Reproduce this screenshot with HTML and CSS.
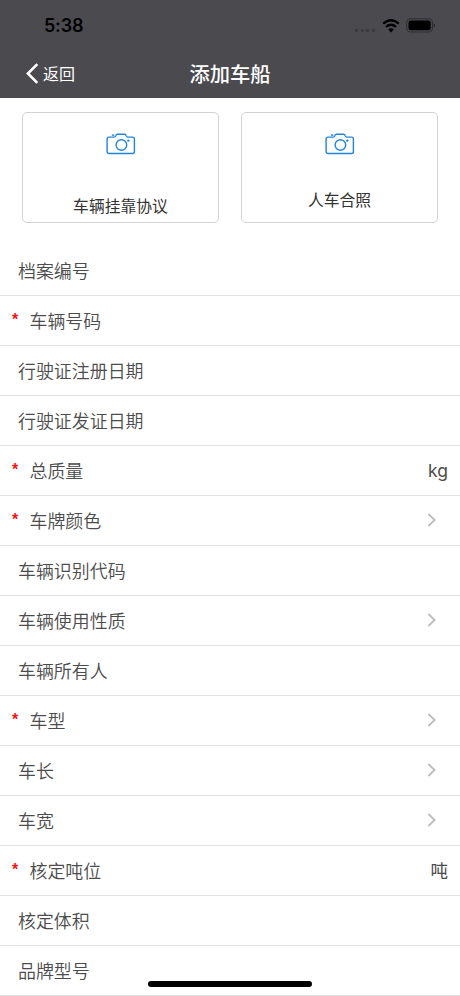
FILE: index.html
```html
<!DOCTYPE html>
<html lang="zh-CN">
<head>
<meta charset="utf-8">
<title>添加车船</title>
<link rel="stylesheet" href="styles.css">
</head>
<body>
<svg width="0" height="0" class="defs">
  <symbol id="camera" viewBox="0 0 30 22">
    <path d="M3 4.1H8.2Q9.4 4.1 9.8 2.9Q10.2 1.3 11.5 1.3H18.5Q19.8 1.3 20.2 2.9Q20.6 4.1 21.8 4.1H26.5Q28.4 4.1 28.4 6V18.6Q28.4 20.5 26.5 20.5H3Q1.1 20.5 1.1 18.6V6Q1.1 4.1 3 4.1Z"/>
    <circle cx="15.4" cy="12" r="5.3"/>
    <path d="M5.8 2.1H8.4"/>
    <circle class="dot" cx="22.3" cy="7.6" r="1.2"/>
  </symbol>
  <symbol id="chevron" viewBox="0 0 10 16"><path d="M1.4 2 7.6 8 1.4 14"/></symbol>
</svg>
<main class="screen">
  <header class="header">
    <div class="status">
      <span class="time">5:38</span>
      <div class="indicators">
        <div class="signal"><i></i><i></i><i></i><i></i></div>
        <svg class="wifi" width="18" height="14" viewBox="0 0 18 14">
          <path d="M1.2 4.7Q9-2.2 16.8 4.7M4.1 7.8Q9 3.6 13.9 7.8"/>
          <path class="base" d="M6.2 10.3Q9 8.2 11.8 10.3L9 13.4Z"/>
        </svg>
        <svg class="battery" width="30" height="15" viewBox="0 0 30 15">
          <rect class="case" x=".7" y=".8" width="25.8" height="13.2" rx="4"/>
          <rect x="2.5" y="2.6" width="22.2" height="9.6" rx="2.3"/>
          <path class="tip" d="M27.7 5.2Q30.6 7.4 27.7 9.6Z"/>
        </svg>
      </div>
    </div>
    <nav class="nav">
      <div class="back">
        <svg width="13" height="21" viewBox="0 0 13 21"><path d="M11.3 1.2 1.9 10.5 11.3 19.8"/></svg>
        <span>返回</span>
      </div>
      <h1>添加车船</h1>
    </nav>
  </header>
  <section class="uploads">
    <div class="card"><svg class="camera"><use href="#camera"/></svg><span class="low">车辆挂靠协议</span></div>
    <div class="card"><svg class="camera"><use href="#camera"/></svg><span>人车合照</span></div>
  </section>
  <section class="form">
    <div class="row"><span>档案编号</span></div>
    <div class="row required"><b>*</b><span>车辆号码</span></div>
    <div class="row"><span>行驶证注册日期</span></div>
    <div class="row"><span>行驶证发证日期</span></div>
    <div class="row required"><b>*</b><span>总质量</span><em>kg</em></div>
    <div class="row required"><b>*</b><span>车牌颜色</span><svg class="chevron"><use href="#chevron"/></svg></div>
    <div class="row"><span>车辆识别代码</span></div>
    <div class="row"><span>车辆使用性质</span><svg class="chevron"><use href="#chevron"/></svg></div>
    <div class="row"><span>车辆所有人</span></div>
    <div class="row required"><b>*</b><span>车型</span><svg class="chevron"><use href="#chevron"/></svg></div>
    <div class="row"><span>车长</span><svg class="chevron"><use href="#chevron"/></svg></div>
    <div class="row"><span>车宽</span><svg class="chevron"><use href="#chevron"/></svg></div>
    <div class="row required"><b>*</b><span>核定吨位</span><em>吨</em></div>
    <div class="row"><span>核定体积</span></div>
    <div class="row"><span>品牌型号</span></div>
  </section>
  <div class="home-bar"></div>
</main>
</body>
</html>
```
FILE: styles.css
```css
* { box-sizing: border-box; }
body {
  margin: 0;
  background: #fff;
  color: #4c4c4c;
  font-family: Inter, "Noto Sans CJK SC", sans-serif;
}
.defs { position: absolute; }
svg { display: block; flex: none; }
.screen { position: relative; height: 996px; overflow: hidden; }
.header { height: 98px; background: #4b4a4f; }
.status {
  height: 50px;
  padding: 1px 24px 0 44px;
  display: flex;
  align-items: center;
  justify-content: space-between;
  color: #000;
}
.time { font-size: 18px; line-height: 22px; font-weight: 600; letter-spacing: -.2px; }
.indicators { display: flex; align-items: center; }
.signal { display: flex; gap: 2.4px; margin: 10px 7px 0 0; }
.signal i { width: 3.2px; height: 3.2px; border-radius: 1px; background: #3a393d; }
.wifi { margin-right: 6px; fill: none; stroke: #000; stroke-width: 2.3; }
.wifi .base { fill: #000; stroke: none; }
.battery .case { fill: none; stroke: #302f33; stroke-width: 1.1; }
.battery .tip { fill: #29282c; }
.nav {
  height: 48px;
  padding: 0 26px 1px;
  display: grid;
  grid-template-columns: 1fr auto 1fr;
  align-items: center;
  color: #fff;
}
.back { display: flex; align-items: center; gap: 4px; font-size: 16px; line-height: 24px; }
.back svg { fill: none; stroke: #fff; stroke-width: 2.6; }
.nav h1 { margin: 0; padding-top: 2px; font-size: 20.3px; line-height: 28px; font-weight: 500; }
.uploads {
  height: 148px;
  padding: 14px 22px 0;
  display: flex;
  gap: 22px;
}
.card {
  flex: 1;
  height: 111px;
  padding-top: 20px;
  display: flex;
  flex-direction: column;
  align-items: center;
  border: 1px solid #d2d2d2;
  border-radius: 5px;
  color: #333;
  font-size: 15.8px;
  line-height: 24px;
}
.card span { margin-top: 34px; }
.card .low { margin-top: 40px; }
.camera { width: 30px; height: 22px; fill: none; stroke: #2185dc; stroke-width: 1.4; }
.dot { fill: #2185dc; stroke: none; }
.row {
  height: 50px;
  padding: 2px 12px 0 18px;
  display: flex;
  align-items: center;
  border-bottom: 1px solid #e2e2e2;
  font-size: 17.95px;
  line-height: 26px;
  font-weight: 350;
}
.required { padding-left: 12px; }
.row b {
  width: 17.5px;
  margin-top: -4px;
  color: #f01616;
  font: 700 16px/20px "Liberation Sans", sans-serif;
}
.row em { margin: -2px 0 0 auto; font-style: normal; font-size: 17.5px; font-weight: 400; }
.chevron { width: 10px; height: 16px; margin: -3px 11px 0 auto; fill: none; stroke: #bdbdbd; stroke-width: 1.9; }
.home-bar {
  position: absolute;
  left: 148px;
  bottom: 9px;
  width: 164px;
  height: 6px;
  border-radius: 3px;
  background: #000;
}
```
